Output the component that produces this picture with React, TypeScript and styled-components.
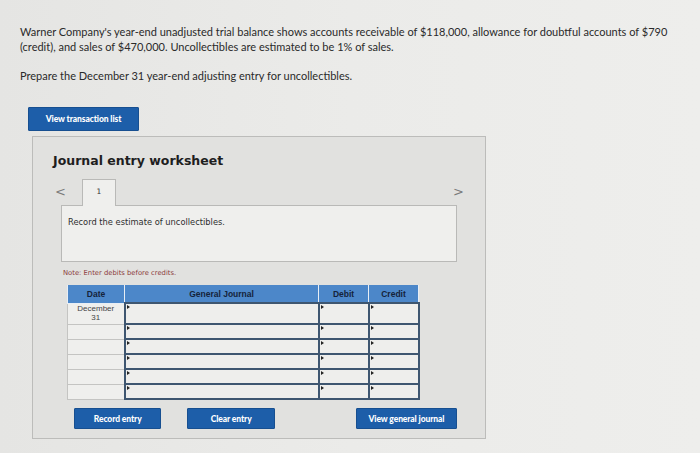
import styled, { createGlobalStyle } from "styled-components";

const GlobalStyle = createGlobalStyle`
  html, body {
    margin: 0;
    padding: 0;
    background: linear-gradient(90deg, #e5e5e3 0%, #ebebe9 50%, #eeeeec 100%);
    font-family: "Lato", "Open Sans", sans-serif;
    color: #2b2b2b;
  }
`;

const Page = styled.main`
  width: 700px;
  height: 453px;
  padding: 24px 20px 0 20px;
  box-sizing: border-box;
  overflow: hidden;
`;

const Question = styled.p<{ top?: number }>`
  margin: ${({ top }) => top ?? 0}px 0 0 0;
  font-size: 11px;
  line-height: 15px;
  color: #2a2a2a;
`;

const BlueButton = styled.button<{ w: number }>`
  width: ${({ w }) => w}px;
  height: 21px;
  background: #1d5ea9;
  color: #fff;
  border: 1px solid #174f90;
  border-radius: 1px;
  font-family: "Lato", sans-serif;
  font-weight: 900;
  font-size: 8.5px;
  letter-spacing: -0.1px;
  padding: 0;
  cursor: pointer;
`;

const TopButton = styled(BlueButton)`
  margin: 24px 0 0 8px;
  height: 24px;
  display: block;
`;

const Panel = styled.section`
  margin: 5px 0 0 12px;
  width: 454px;
  height: 303px;
  box-sizing: border-box;
  background: #e1e1df;
  border: 1px solid #bcbcba;
  padding: 15px 28px 0 28px;
`;

const Title = styled.h2`
  margin: 0 0 0 -8px;
  font-family: "DejaVu Sans", Verdana, sans-serif;
  font-size: 12.5px;
  line-height: 18px;
  font-weight: bold;
  color: #1e1e1e;
`;

const TabRow = styled.div`
  display: flex;
  align-items: flex-end;
  margin-top: 8px;
  height: 27px;
`;

const Arrow = styled.span<{ right?: boolean }>`
  font-family: "DejaVu Sans", sans-serif;
  font-size: 13px;
  color: #7a7a7a;
  align-self: center;
  margin-left: ${({ right }) => (right ? "auto" : "-6px")};
  margin-right: ${({ right }) => (right ? "-7px" : "0")};
`;

const Tab = styled.div`
  width: 34px;
  height: 27px;
  box-sizing: border-box;
  margin-left: 16px;
  margin-bottom: -1px;
  background: #efefed;
  border: 1px solid #b9b9b7;
  border-bottom: none;
  display: flex;
  justify-content: center;
  padding-top: 7px;
  font-family: "DejaVu Sans", sans-serif;
  font-size: 7.5px;
  color: #333;
  position: relative;
  z-index: 1;
`;

const ContentBox = styled.div`
  height: 57px;
  box-sizing: border-box;
  background: #efefed;
  border: 1px solid #b9b9b7;
  padding: 11px 6px 0 6px;
  font-family: "DejaVu Sans", Verdana, sans-serif;
  font-size: 8.3px;
  color: #2e2e2e;
`;

const Note = styled.div`
  margin: 7px 0 0 2px;
  font-family: "DejaVu Sans", Verdana, sans-serif;
  font-size: 6.8px;
  color: #8b3b3b;
`;

const Table = styled.table`
  margin: 8px 0 0 6px;
  border-collapse: collapse;
  table-layout: fixed;
  width: 347px;
`;

const Head = styled.th<{ w: number }>`
  width: ${({ w }) => w}px;
  height: 17px;
  padding: 0;
  background: #4c87c9;
  border: 1px solid #e8eef5;
  border-top: none;
  font-family: "Liberation Sans", Arial, sans-serif;
  font-size: 8.5px;
  font-weight: bold;
  color: #15233a;
`;

const DateCell = styled.td<{ first?: boolean }>`
  height: ${({ first }) => (first ? 20 : 14)}px;
  padding: 0;
  background: #efefed;
  border: 1px solid #c4c4c2;
  font-family: "Liberation Sans", Arial, sans-serif;
  font-size: 8px;
  line-height: 9px;
  color: #444;
  text-align: center;
  vertical-align: top;
`;

const InputCell = styled.td`
  padding: 0;
  background: #eeeeec;
  border: 2px solid #3e5670;
  position: relative;

  &::before {
    content: "";
    position: absolute;
    top: 1px;
    left: 1px;
    border-left: 3px solid #222;
    border-top: 2px solid transparent;
    border-bottom: 2px solid transparent;
  }
`;

const ButtonRow = styled.div`
  display: flex;
  align-items: flex-start;
  margin-top: 8px;
  padding-left: 13px;
`;

const Spacer = styled.div<{ w: number }>`
  width: ${({ w }) => w}px;
  flex: none;
`;

const rows = [0, 1, 2, 3, 4, 5];

export default function App() {
  return (
    <>
      <GlobalStyle />
      <Page>
        <Question>
          Warner Company's year-end unadjusted trial balance shows accounts receivable of $118,000, allowance for doubtful
          accounts of $790 (credit), and sales of $470,000. Uncollectibles are estimated to be 1% of sales.
        </Question>
        <Question top={14}>Prepare the December 31 year-end adjusting entry for uncollectibles.</Question>
        <TopButton w={111}>View transaction list</TopButton>
        <Panel>
          <Title>Journal entry worksheet</Title>
          <TabRow>
            <Arrow>&lt;</Arrow>
            <Tab>1</Tab>
            <Arrow right>&gt;</Arrow>
          </TabRow>
          <ContentBox>Record the estimate of uncollectibles.</ContentBox>
          <Note>Note: Enter debits before credits.</Note>
          <Table>
            <thead>
              <tr>
                <Head w={56}>Date</Head>
                <Head w={193}>General Journal</Head>
                <Head w={49}>Debit</Head>
                <Head w={49}>Credit</Head>
              </tr>
            </thead>
            <tbody>
              {rows.map((r) => (
                <tr key={r}>
                  <DateCell first={r === 0}>
                    {r === 0 && (
                      <>
                        December
                        <br />
                        31
                      </>
                    )}
                  </DateCell>
                  <InputCell />
                  <InputCell />
                  <InputCell />
                </tr>
              ))}
            </tbody>
          </Table>
          <ButtonRow>
            <BlueButton w={89}>Record entry</BlueButton>
            <Spacer w={26} />
            <BlueButton w={89}>Clear entry</BlueButton>
            <Spacer w={81} />
            <BlueButton w={103}>View general journal</BlueButton>
          </ButtonRow>
        </Panel>
      </Page>
    </>
  );
}
